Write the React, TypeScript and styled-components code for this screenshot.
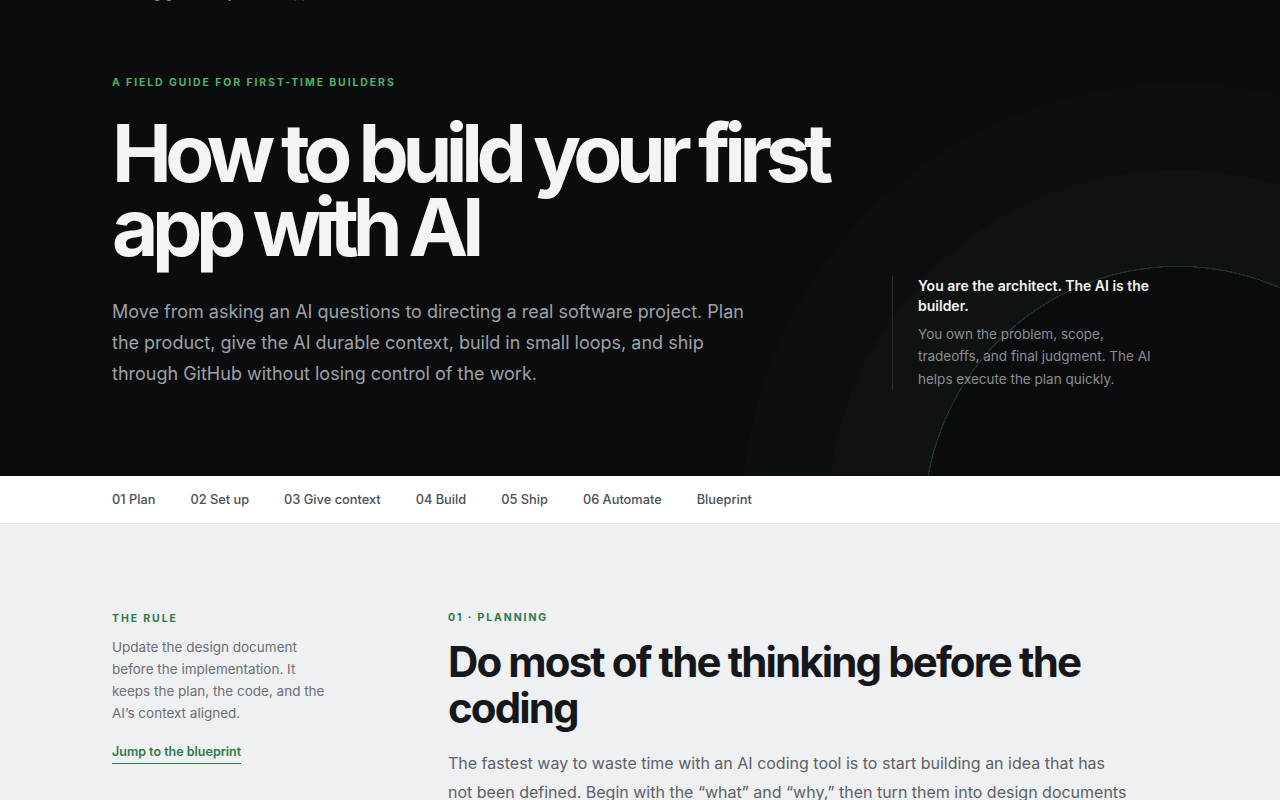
import React from "react";
import styled, { createGlobalStyle } from "styled-components";

const Global = createGlobalStyle`
  * { box-sizing: border-box; }
  html, body { margin: 0; padding: 0; }
  body {
    font-family: Inter, "Noto Sans", "Liberation Sans", sans-serif;
    background: #eef0f2;
    -webkit-font-smoothing: antialiased;
  }
`;

const Hero = styled.header`
  margin-top: -55px;
  background-color: #0b0c0e;
  background-image: radial-gradient(
    circle at 1178px 575px,
    #0b0c0e 0 253px,
    #1d3527 253px 254.2px,
    #0e1211 254.2px 350px,
    #0c0f0f 350px 436px,
    #0b0c0e 436px
  );
  overflow: hidden;
`;

const TopBar = styled.div`
  height: 56px;
  padding: 0 112px;
  display: flex;
  align-items: flex-end;
  font-size: 13px;
  line-height: 16px;
  color: #8a8d92;
`;

const HeroInner = styled.div`
  padding: 74px 112px 87px;
  display: grid;
  grid-template-columns: minmax(0, 1fr) 276px;
  column-gap: 64px;
  align-items: end;
`;

const HeroMain = styled.div`
  display: flex;
  flex-direction: column;
`;

const Eyebrow = styled.div<{ $tone: "light" | "dark" }>`
  font-size: 10.5px;
  line-height: 16px;
  font-weight: 700;
  letter-spacing: 0.18em;
  text-transform: uppercase;
  color: ${(p) => (p.$tone === "light" ? "#4fb26a" : "#2f7a45")};
`;

const Title = styled.h1`
  margin: 25px 0 0;
  font-size: 80px;
  line-height: 74px;
  font-weight: 700;
  letter-spacing: -0.08em;
  color: #f4f4f6;
  white-space: nowrap;
`;

const Lede = styled.p`
  margin: 32px 0 0;
  max-width: 650px;
  font-size: 18px;
  line-height: 31px;
  color: #9ea1a6;
`;

const Aside = styled.aside`
  border-left: 1px solid #2a2d31;
  padding-left: 25px;
  margin-bottom: -1px;
`;

const AsideTitle = styled.div`
  font-size: 14px;
  line-height: 20px;
  font-weight: 600;
  color: #f4f4f6;
`;

const AsideBody = styled.p`
  margin: 7px 0 0;
  font-size: 13.5px;
  line-height: 22.5px;
  color: #8b8e93;
`;

const Nav = styled.nav`
  height: 48px;
  background: #ffffff;
  border-bottom: 1px solid #e2e4e8;
  padding: 0 112px;
  display: flex;
  align-items: center;
  gap: 35px;
`;

const NavLink = styled.a`
  font-size: 12.8px;
  font-weight: 500;
  color: #4b4f56;
  text-decoration: none;
  margin-top: -1px;
`;

const Section = styled.section`
  padding: 86px 112px 0;
  display: grid;
  grid-template-columns: 280px minmax(0, 1fr);
  column-gap: 56px;
`;

const Sidebar = styled.div`
  display: flex;
  flex-direction: column;
  align-items: flex-start;
  padding-top: 1px;
`;

const SideText = styled.p`
  margin: 9px 0 0;
  max-width: 222px;
  font-size: 13.5px;
  line-height: 22px;
  color: #6b6f75;
`;

const JumpLink = styled.a`
  margin-top: 19px;
  font-size: 12.5px;
  line-height: 18px;
  font-weight: 600;
  color: #2f7a45;
  text-decoration: none;
  padding-bottom: 2px;
  border-bottom: 1.5px solid #2f7a45;
`;

const Article = styled.article`
  display: flex;
  flex-direction: column;
  max-width: 684px;
`;

const SectionTitle = styled.h2`
  margin: 13px 0 0;
  font-size: 42px;
  line-height: 46px;
  font-weight: 700;
  letter-spacing: -0.045em;
  color: #16171a;
`;

const Body = styled.p`
  margin: 18px 0 0;
  font-size: 16px;
  line-height: 28.5px;
  color: #5d6167;
`;

const navItems = [
  "01 Plan",
  "02 Set up",
  "03 Give context",
  "04 Build",
  "05 Ship",
  "06 Automate",
  "Blueprint",
];

export default function App() {
  return (
    <>
      <Global />
      <Hero>
        <TopBar>Building guide, for your first app</TopBar>
        <HeroInner>
          <HeroMain>
            <Eyebrow $tone="light">A field guide for first-time builders</Eyebrow>
            <Title>
              How to build your first
              <br />
              app with AI
            </Title>
            <Lede>
              Move from asking an AI questions to directing a real software project. Plan
              the product, give the AI durable context, build in small loops, and ship
              through GitHub without losing control of the work.
            </Lede>
          </HeroMain>
          <Aside>
            <AsideTitle>You are the architect. The AI is the builder.</AsideTitle>
            <AsideBody>
              You own the problem, scope, tradeoffs, and final judgment. The AI helps
              execute the plan quickly.
            </AsideBody>
          </Aside>
        </HeroInner>
      </Hero>
      <Nav>
        {navItems.map((item) => (
          <NavLink key={item} href="#">
            {item}
          </NavLink>
        ))}
      </Nav>
      <Section>
        <Sidebar>
          <Eyebrow $tone="dark">The rule</Eyebrow>
          <SideText>
            Update the design document before the implementation. It keeps the plan, the
            code, and the AI’s context aligned.
          </SideText>
          <JumpLink href="#">Jump to the blueprint</JumpLink>
        </Sidebar>
        <Article>
          <Eyebrow $tone="dark">01 · Planning</Eyebrow>
          <SectionTitle>Do most of the thinking before the coding</SectionTitle>
          <Body>
            The fastest way to waste time with an AI coding tool is to start building an
            idea that has not been defined. Begin with the “what” and “why,” then turn
            them into design documents before asking for any code.
          </Body>
        </Article>
      </Section>
    </>
  );
}
